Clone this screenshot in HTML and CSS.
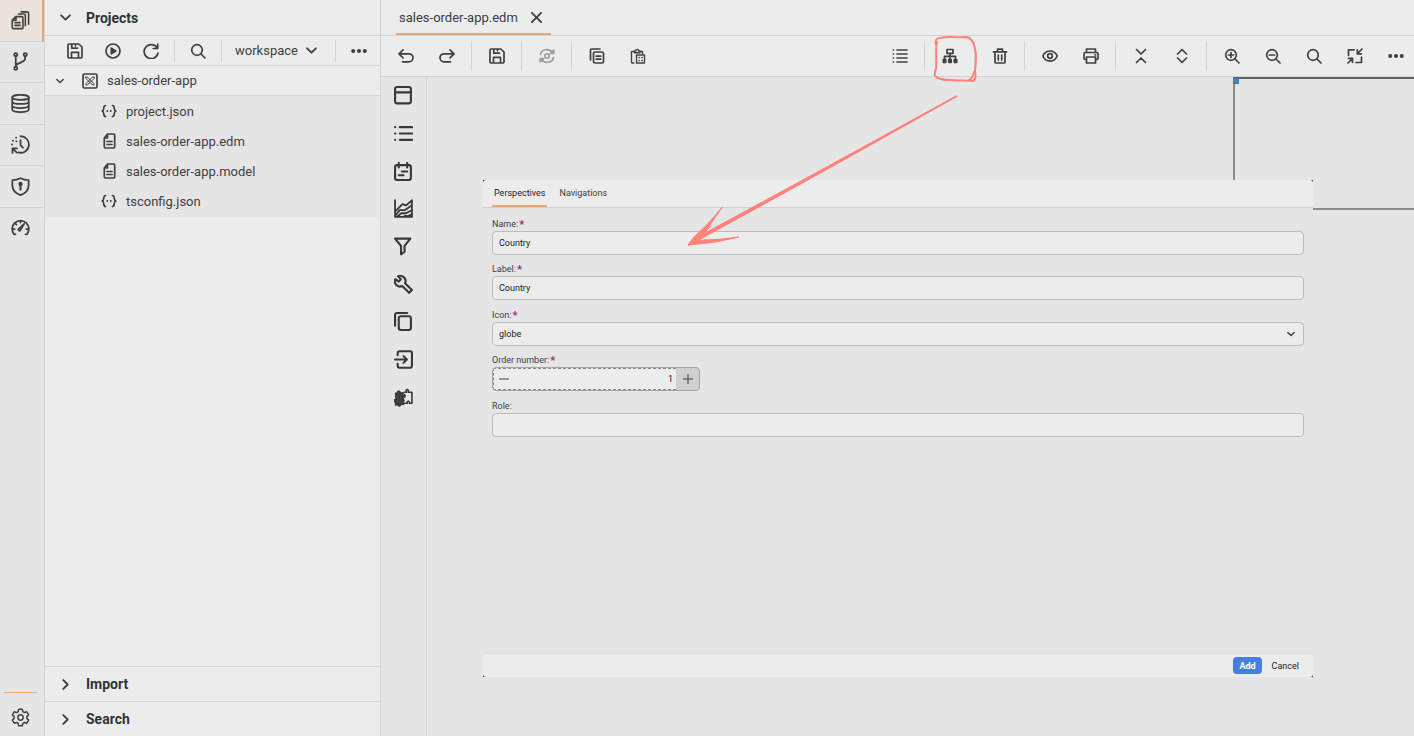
FILE: index.html
```html
<!DOCTYPE html>
<html lang="en">
<head>
    <meta charset="UTF-8">
    <meta name="viewport" content="width=device-width, initial-scale=1.0">
    <title>sales-order-app.edm</title>
    <link rel="stylesheet" href="styles.css">
</head>
<body>
    <!-- Icon sprite -->
    <svg class="sprite" aria-hidden="true">
        <symbol id="i-files" viewBox="0 0 18 18"><path d="M4.500 5.300h5.800a1 1 0 0 1 1 1v9.400a1 1 0 0 1-1 1H2.200a1 1 0 0 1-1-1V8.600zM4.800 5.500v3.300H1.500M3.700 11h5M3.700 13.600h5M7 2.800h5.400a1.200 1.200 0 0 1 1.200 1.200v10M9.500.8h6a1.200 1.200 0 0 1 1.200 1.200v10.500" stroke-width="1.500"/></symbol>
        <symbol id="i-branch" viewBox="0 0 18 18"><circle cx="4.500" cy="2.500" r="1.500"/><circle cx="13.500" cy="2.500" r="1.500"/><circle cx="4.500" cy="15.500" r="1.500"/><path d="M4.500 4v10M13.300 4v2.500q0 1.500-1.500 2.200L6 11.500q-1.500.8-1.500 2.500"/></symbol>
        <symbol id="i-db" viewBox="0 0 18 18"><ellipse cx="9" cy="3.200" rx="7.800" ry="2.400"/><path d="M1.200 3.200v11.500c0 3.200 15.600 3.200 15.600 0V3.200M1.200 7c0 3.200 15.600 3.200 15.600 0M1.200 10.900c0 3.200 15.600 3.200 15.600 0"/></symbol>
        <symbol id="i-history" viewBox="0 0 18 18"><path d="M9 1.200a7.800 7.800 0 1 1-2 15.300M9 4.800v4.700l2.300 2.500M5.500 16.700L2.500 13.700M1.400 17v-4.300h4.300"/><path d="M4.800 2.500h.1M1.800 5.500h.1M.9 9h.1M5.200 6h.1" stroke-width="1.800"/></symbol>
        <symbol id="i-shield" viewBox="0 0 18 18"><path d="M9 1.200c2.500 1.300 5 1.800 7.700 1.800v5c0 4.500-3 7.300-7.700 9.200C4.300 15.300 1.300 12.500 1.300 8V3C4 3 6.500 2.500 9 1.200z"/><circle cx="9" cy="6.600" r="1.200" class="solid"/><path d="M9 7v5" stroke-width="2"/></symbol>
        <symbol id="i-gauge" viewBox="0 0 18 18"><path d="M4.200 15.500H3A7.900 7.900 0 1 1 15 15.500h-1.200M1.500 10.500h2M14.500 10.500h2M4 5l1.200 1.200M9 2.500v1.800"/><path d="M7 10.500l5.500-5-4 6.500a1.200 1.200 0 0 1-1.500-1.500z"/></symbol>
        <symbol id="i-gear" viewBox="0 0 18 18"><g stroke-width="1.400"><circle cx="9" cy="9" r="2.500"/><path d="M7.300 1.200h3.400l.6 2.300 1.400.8 2.300-.7 1.700 3-1.700 1.600v1.600l1.700 1.600-1.700 3-2.300-.7-1.400.8-.6 2.300H7.300l-.6-2.300-1.400-.8-2.300.7-1.700-3L3 9.800V8.200L1.300 6.600l1.700-3 2.300.7 1.400-.8z"/></g></symbol>
        <symbol id="i-save" viewBox="0 0 16 16"><path d="M2.200 1h9.600L15 4v9.800a1.200 1.200 0 0 1-1.200 1.200H2.200A1.200 1.200 0 0 1 1 13.800V2.200A1.200 1.200 0 0 1 2.200 1zM4.800 1v4.200h5.700M8.500 1v1.800M4.500 15V9.300h7V15"/></symbol>
        <symbol id="i-play" viewBox="0 0 16 16"><circle cx="8" cy="8" r="7"/><path class="solid" d="M6.300 5.200L10.800 8l-4.500 2.800z"/></symbol>
        <symbol id="i-refresh" viewBox="0 0 16 16"><path d="M14.700 1v4.500h-4.500M14.300 5.300A7 7 0 1 0 15 10"/></symbol>
        <symbol id="i-search" viewBox="0 0 16 16"><circle cx="7" cy="7" r="5.300"/><path d="M11 11l4 4"/></symbol>
        <symbol id="i-zoomin" viewBox="0 0 16 16"><circle cx="7" cy="7" r="5.300"/><path d="M11 11l4 4M4.500 7h5M7 4.500v5"/></symbol>
        <symbol id="i-zoomout" viewBox="0 0 16 16"><circle cx="7" cy="7" r="5.300"/><path d="M11 11l4 4M4.500 7h5"/></symbol>
        <symbol id="i-down" viewBox="0 0 10 10"><path d="M1 3l4 4 4-4"/></symbol>
        <symbol id="i-right" viewBox="0 0 10 10"><path d="M3 1l4 4-4 4"/></symbol>
        <symbol id="i-dots" viewBox="0 0 16 16"><g class="solid"><circle cx="2.200" cy="8" r="1.200"/><circle cx="8" cy="8" r="1.200"/><circle cx="13.800" cy="8" r="1.200"/></g></symbol>
        <symbol id="i-app" viewBox="0 0 16 16"><rect x="1" y="1" width="14" height="14" rx="1.500"/><path d="M4 4l1.800.3 6.200 6.400V12h-1.500L4 5.500zM12 4l-1.800.3L4 10.700V12h1.500L12 5.500z" stroke-width="1"/></symbol>
        <symbol id="i-json" viewBox="0 0 16 16"><path d="M4.500 2.500C1.500 2.500 4 7.300 1.200 8c2.800.7.3 5.500 3.300 5.500M11.500 2.500c3 0 .5 4.800 3.300 5.500-2.800.7-.3 5.500-3.300 5.500"/><path d="M6.200 8h.1M9.700 8h.1" stroke-width="1.800"/></symbol>
        <symbol id="i-doc" viewBox="0 0 16 16"><path d="M6.500 1h6a1.200 1.200 0 0 1 1.200 1.200v11.600a1.200 1.200 0 0 1-1.200 1.200h-8a1.200 1.200 0 0 1-1.200-1.200V5zM6.500 1.200V5h-3M6 8.500h5M6 11.500h5"/></symbol>
        <symbol id="i-close" viewBox="0 0 10 10"><path d="M.8.8l8.400 8.400M9.200.8L.8 9.200"/></symbol>
        <symbol id="i-undo" viewBox="0 0 16 16"><path d="M5 1.800L1 5.800l4 4M1.200 5.800H11a4 4 0 0 1 0 8H4.500"/></symbol>
        <symbol id="i-redo" viewBox="0 0 16 16"><path d="M11 1.800l4 4-4 4M14.800 5.800H5a4 4 0 0 0 0 8h6.500"/></symbol>
        <symbol id="i-sync" viewBox="0 0 16 16"><circle cx="8" cy="8" r="2.200"/><path d="M1.500 6.500C2.500 1 10 0 13.500 4.500M14.500 9.500C13.500 15 6 16 2.500 11.500"/><path class="solid" d="M14.800 2v3.500h-3.500zM1.200 14v-3.500h3.500z"/></symbol>
        <symbol id="i-copytext" viewBox="0 0 16 16"><rect x="4.500" y="4" width="10" height="11" rx="1.500"/><path d="M1.500 12V2.200A1.200 1.200 0 0 1 2.700 1H11M7.200 8.200h4.500M7.200 11.200h4.500"/></symbol>
        <symbol id="i-paste" viewBox="0 0 16 16"><path d="M4 15H2.500a1 1 0 0 1-1-1V3.500h3M10 3.500h2.500v2M4.500 4.800h5.500V3H8.800a1.500 1.500 0 0 0-3 0H4.500zM6.500 7h8v8h-8z" stroke-width="1.400"/><path d="M9 9.500h.1M12 9.500h.1M9 12.500h.1M12 12.500h.1"/></symbol>
        <symbol id="i-lines" viewBox="0 0 16 16"><path d="M5 2h10M5 6h10M5 10h10M5 14h10M1.300 2h.2M1.300 6h.2M1.300 10h.2M1.300 14h.2"/></symbol>
        <symbol id="i-tree" viewBox="0 0 16 16"><path d="M5 1.500h6v3.800H5zM8 5.300v6M2.500 11V8.300h11V11"/><path class="solid" d="M1.300 11.700h2.400v2.600H1.300zM6.800 11.700h2.400v2.600H6.800zM12.300 11.700h2.400v2.600h-2.400z"/></symbol>
        <symbol id="i-trash" viewBox="0 0 16 16"><path d="M1.500 3.800h13M5.500 3.500V1.200h5v2.300M3 4v9.800A1.200 1.200 0 0 0 4.200 15h7.600a1.200 1.200 0 0 0 1.200-1.200V4M6.300 7v5M9.700 7v5"/></symbol>
        <symbol id="i-eye" viewBox="0 0 16 16"><path d="M.8 8c3-6.700 11.400-6.700 14.400 0-3 6.700-11.400 6.700-14.400 0z"/><circle cx="8" cy="8" r="2.300"/></symbol>
        <symbol id="i-print" viewBox="0 0 16 16"><path d="M3.500 4.500V1h9v3.500M3.500 11.500H2.200A1.200 1.200 0 0 1 1 10.300V5.700a1.200 1.200 0 0 1 1.200-1.200h11.600A1.200 1.200 0 0 1 15 5.700v4.600a1.200 1.200 0 0 1-1.200 1.200h-1.300M3.500 9h9v6h-9zM12 6.800h.5"/></symbol>
        <symbol id="i-collapse" viewBox="0 0 16 16"><path d="M3.500 1.500L8 6l4.500-4.500M3.500 14.500L8 10l4.500 4.500"/></symbol>
        <symbol id="i-expand" viewBox="0 0 16 16"><path d="M3.500 6L8 1.500 12.500 6M3.500 10L8 14.500l4.500-4.500"/></symbol>
        <symbol id="i-fit" viewBox="0 0 16 16"><path d="M7 1.800H1.500v5.500M9 14.500h5.500V9M15 1l-4.500 4.500M10.300 1.800v4h4M1 15l4.500-4.500M1.500 10.300h4v4"/></symbol>
        <symbol id="i-panel" viewBox="0 0 18 18"><rect x="1" y="1" width="15" height="15.500" rx="2"/><path d="M1 6h15"/></symbol>
        <symbol id="i-list" viewBox="0 0 18 18"><path d="M5.500 3h11.700M5.500 9h11.700M5.500 15h11.700M1 3h.2M1 9h.2M1 15h.2"/></symbol>
        <symbol id="i-notes" viewBox="0 0 18 18"><rect x="1" y="3" width="15" height="14" rx="2"/><path d="M4.500.9v4.300M12.500.9v4.300M7.500 9h5M4.500 12.500h4.500"/></symbol>
        <symbol id="i-chart" viewBox="0 0 18 18"><path d="M1 1v16h16V1.200L11.500 6 8 4.800 1 12M1 16l4.500-5.500h5L17 6M3 16.800l4-3.300h4.500L17 10.500M8.500 17l2-1 3 .2 3.500-2" stroke-width="1.700"/></symbol>
        <symbol id="i-filter" viewBox="0 0 18 18"><path d="M1 1.500h14.500L10 8.500v5.500l-3.300 2.500v-8z"/></symbol>
        <symbol id="i-wrench" viewBox="0 0 18 18"><path d="M3.800 1.300A5 5 0 0 1 10.500 7.800l6.500 6.400-2.700 2.700L7.800 10.500A5 5 0 0 1 1.200 4l3.200 2.300L6.500 4z"/></symbol>
        <symbol id="i-copy" viewBox="0 0 18 18"><rect x="4.500" y="4" width="11.500" height="13" rx="2"/><path d="M1 13V3a2 2 0 0 1 2-2h9.500"/></symbol>
        <symbol id="i-enter" viewBox="0 0 18 18"><path d="M3.500 5V3a1.800 1.800 0 0 1 1.800-1.800h10A1.800 1.800 0 0 1 17 3v12a1.800 1.800 0 0 1-1.800 1.800h-10A1.800 1.800 0 0 1 3.500 15v-2M1 9h11M9 5.800L12.200 9 9 12.200"/></symbol>
        <symbol id="i-puzzle" viewBox="0 0 18 18"><g stroke-width="1.500"><path class="solid" d="M1.500 5h2.200q-.8-2 .8-2t.8 2l3.200-.5v2.200q2-1 2 .8t-2 1.200l.5 2.300q1 1.500-.5 2l.5 2.500-2.800-.5q.3 2-1.200 2t-.8-2l-2.700 1 .5-3q-1.800.5-1.800-1t1.800-1z"/><path d="M9.500 4h2.300q-.8-2.500.7-2.500T13.500 4h3.500v10.500h-2.500q.3-2-1-2t-1 2H10"/></g></symbol>
    </svg>

    <div class="app">
        <nav class="rail">
            <div class="rail-items">
                <button class="rail-btn active" aria-label="Projects"><svg class="icon lg"><use href="#i-files"/></svg></button>
                <button class="rail-btn" aria-label="Git"><svg class="icon lg"><use href="#i-branch"/></svg></button>
                <button class="rail-btn" aria-label="Database"><svg class="icon lg"><use href="#i-db"/></svg></button>
                <button class="rail-btn" aria-label="Jobs"><svg class="icon lg"><use href="#i-history"/></svg></button>
                <button class="rail-btn" aria-label="Security"><svg class="icon lg"><use href="#i-shield"/></svg></button>
                <button class="rail-btn" aria-label="Monitoring"><svg class="icon lg"><use href="#i-gauge"/></svg></button>
            </div>
            <button class="settings" aria-label="Settings"><svg class="icon lg"><use href="#i-gear"/></svg></button>
        </nav>

        <aside class="sidebar">
            <button class="section"><svg class="icon sm"><use href="#i-down"/></svg>Projects</button>
            <div class="side-toolbar">
                <button class="tool" aria-label="Save all"><svg class="icon"><use href="#i-save"/></svg></button>
                <button class="tool" aria-label="Publish"><svg class="icon"><use href="#i-play"/></svg></button>
                <button class="tool" aria-label="Refresh"><svg class="icon"><use href="#i-refresh"/></svg></button>
                <span class="sep"></span>
                <button class="tool" aria-label="Search"><svg class="icon"><use href="#i-search"/></svg></button>
                <span class="sep"></span>
                <button class="workspace">workspace <svg class="icon sm"><use href="#i-down"/></svg></button>
                <span class="sep"></span>
                <button class="tool" aria-label="More"><svg class="icon"><use href="#i-dots"/></svg></button>
            </div>
            <button class="project"><svg class="icon xs"><use href="#i-down"/></svg><svg class="icon"><use href="#i-app"/></svg>sales-order-app</button>
            <ul class="files">
                <li><a href="#"><svg class="icon"><use href="#i-json"/></svg>project.json</a></li>
                <li><a href="#"><svg class="icon"><use href="#i-doc"/></svg>sales-order-app.edm</a></li>
                <li><a href="#"><svg class="icon"><use href="#i-doc"/></svg>sales-order-app.model</a></li>
                <li><a href="#"><svg class="icon"><use href="#i-json"/></svg>tsconfig.json</a></li>
            </ul>
            <div class="side-bottom">
                <button class="section"><svg class="icon sm"><use href="#i-right"/></svg>Import</button>
                <button class="section"><svg class="icon sm"><use href="#i-right"/></svg>Search</button>
            </div>
        </aside>

        <main class="editor">
            <div class="tabs">
                <div class="tab">
                    <a href="#">sales-order-app.edm</a>
                    <button aria-label="Close"><svg class="icon sm"><use href="#i-close"/></svg></button>
                </div>
            </div>
            <div class="toolbar">
                <button class="tool" aria-label="Undo"><svg class="icon"><use href="#i-undo"/></svg></button>
                <button class="tool" aria-label="Redo"><svg class="icon"><use href="#i-redo"/></svg></button>
                <span class="sep"></span>
                <button class="tool" aria-label="Save"><svg class="icon"><use href="#i-save"/></svg></button>
                <span class="sep"></span>
                <button class="tool" aria-label="Regenerate" disabled><svg class="icon"><use href="#i-sync"/></svg></button>
                <span class="sep"></span>
                <button class="tool" aria-label="Copy"><svg class="icon"><use href="#i-copytext"/></svg></button>
                <button class="tool" aria-label="Paste"><svg class="icon"><use href="#i-paste"/></svg></button>
                <span class="spacer"></span>
                <button class="tool" aria-label="Properties"><svg class="icon"><use href="#i-lines"/></svg></button>
                <span class="sep"></span>
                <button class="tool" aria-label="Navigation"><svg class="icon"><use href="#i-tree"/></svg></button>
                <span class="sep"></span>
                <button class="tool" aria-label="Delete"><svg class="icon"><use href="#i-trash"/></svg></button>
                <span class="sep"></span>
                <button class="tool" aria-label="Show"><svg class="icon"><use href="#i-eye"/></svg></button>
                <button class="tool" aria-label="Print"><svg class="icon"><use href="#i-print"/></svg></button>
                <span class="sep"></span>
                <button class="tool" aria-label="Collapse all"><svg class="icon"><use href="#i-collapse"/></svg></button>
                <button class="tool" aria-label="Expand all"><svg class="icon"><use href="#i-expand"/></svg></button>
                <span class="sep"></span>
                <button class="tool" aria-label="Zoom in"><svg class="icon"><use href="#i-zoomin"/></svg></button>
                <button class="tool" aria-label="Zoom out"><svg class="icon"><use href="#i-zoomout"/></svg></button>
                <button class="tool" aria-label="Actual size"><svg class="icon"><use href="#i-search"/></svg></button>
                <button class="tool" aria-label="Fit"><svg class="icon"><use href="#i-fit"/></svg></button>
                <button class="tool" aria-label="More"><svg class="icon"><use href="#i-dots"/></svg></button>
            </div>
            <div class="work">
                <div class="palette">
                    <div class="palette-items">
                        <button aria-label="Entity"><svg class="icon lg"><use href="#i-panel"/></svg></button>
                        <button aria-label="Property"><svg class="icon lg"><use href="#i-list"/></svg></button>
                        <button aria-label="Dependent entity"><svg class="icon lg"><use href="#i-notes"/></svg></button>
                        <button aria-label="Report"><svg class="icon lg"><use href="#i-chart"/></svg></button>
                        <button aria-label="Filter"><svg class="icon lg"><use href="#i-filter"/></svg></button>
                        <button aria-label="Setting"><svg class="icon lg"><use href="#i-wrench"/></svg></button>
                        <button aria-label="Copied entity"><svg class="icon lg"><use href="#i-copy"/></svg></button>
                        <button aria-label="Projection"><svg class="icon lg"><use href="#i-enter"/></svg></button>
                        <button aria-label="Extension"><svg class="icon lg"><use href="#i-puzzle"/></svg></button>
                    </div>
                </div>
                <div class="canvas">
                    <div class="outline"><span class="handle"></span></div>
                    <div class="dialog">
                        <div class="dialog-tabs">
                            <button class="active">Perspectives</button>
                            <button>Navigations</button>
                        </div>
                        <div class="dialog-body">
                            <form class="form">
                                <div class="field">
                                    <label for="name">Name:<b>*</b></label>
                                    <input type="text" id="name" value="Country">
                                </div>
                                <div class="field">
                                    <label for="label">Label:<b>*</b></label>
                                    <input type="text" id="label" value="Country">
                                </div>
                                <div class="field">
                                    <label for="icon">Icon:<b>*</b></label>
                                    <div class="select">
                                        <select id="icon"><option>globe</option></select>
                                        <svg class="icon xs"><use href="#i-down"/></svg>
                                    </div>
                                </div>
                                <div class="field">
                                    <label for="order">Order number:<b>*</b></label>
                                    <div class="stepper">
                                        <div class="stepper-value">
                                            <button type="button" aria-label="Decrease"><svg class="icon sm" viewBox="0 0 10 10"><path d="M0 5h10"/></svg></button>
                                            <input type="text" id="order" value="1">
                                        </div>
                                        <button type="button" class="plus" aria-label="Increase"><svg class="icon sm" viewBox="0 0 10 10"><path d="M0 5h10M5 0v10"/></svg></button>
                                    </div>
                                </div>
                                <div class="field">
                                    <label for="role">Role:</label>
                                    <input type="text" id="role">
                                </div>
                            </form>
                        </div>
                        <div class="dialog-footer">
                            <button class="primary">Add</button>
                            <button>Cancel</button>
                        </div>
                    </div>
                </div>
            </div>
        </main>

        <!-- Hand-drawn marker around the navigation button, with an arrow to the dialog -->
        <svg class="marker" viewBox="0 0 750 260">
            <path d="M273 42c-2 8 0 18-1 26-1 5-2 7-1 8 4 4 10 4 16 4 7 1 16 0 21 1 4 0 4-6 3-10 1-8 2-16 0-22-1-6-4-12-10-12-8 1-16-1-25 1-4 0-5 3-4 7"/>
            <path d="M310 72c-1 4-2 7-5 8"/>
            <path class="shaft" d="M292 96Q165 166 32 238L24 245.500 33 241Q165 169 293 96.500z"/>
            <path class="shaft" d="M58 207.500Q44 225 30 237L24 245Q50 243.500 75 237Q54 240 34 240.500Q46 226 58 207.500z"/>
            <path class="gap" d="M47 226L37 236M58 240L40 240"/>
        </svg>
    </div>
</body>
</html>
```
FILE: styles.css
```css
* {
    box-sizing: border-box;
}
body {
    margin: 0;
    font-family: Roboto, "Liberation Sans", sans-serif;
    font-size: 13px;
    color: #404040;
    background-color: #e5e5e5;
}
button, input, select {
    font: inherit;
    color: inherit;
}
button {
    display: flex;
    align-items: center;
    justify-content: center;
    padding: 0;
    border: none;
    background: none;
    cursor: pointer;
}
a {
    color: inherit;
    text-decoration: none;
}
.sprite {
    display: none;
}
.icon {
    flex: none;
    width: 16px;
    height: 16px;
    fill: none;
    stroke: #404040;
    stroke-width: 1.7;
    stroke-linecap: round;
    stroke-linejoin: round;
}
.icon.lg {
    width: 19px;
    height: 19px;
}
.icon.sm {
    width: 11px;
    height: 11px;
}
.icon.xs {
    width: 8px;
    height: 8px;
}
.solid {
    fill: #404040;
}
.app {
    position: relative;
    display: flex;
    height: 100vh;
    overflow: hidden;
}

/* left rail */
.rail {
    display: flex;
    flex-direction: column;
    justify-content: space-between;
    width: 45px;
    border-right: 1px solid #d3d3d3;
}
.rail-items {
    display: flex;
    flex-direction: column;
    height: 248px;
}
.rail-btn {
    flex: 1;
    padding-right: 3px;
    border-bottom: 1px solid #d3d3d3;
}
.rail-btn:last-child {
    border-bottom: none;
}
.rail-btn.active {
    padding-right: 1px;
    background-color: #ebe3db;
    border-right: 2px solid #e0a878;
}
.settings {
    width: 33px;
    height: 44px;
    margin-left: 4px;
    padding-top: 6px;
    border-top: 1px solid #e5ad7a;
}

/* projects panel */
.sidebar {
    display: flex;
    flex-direction: column;
    width: 336px;
    background-color: #ececec;
    border-right: 1px solid #d3d3d3;
}
.section {
    justify-content: flex-start;
    gap: 15px;
    height: 35px;
    padding-left: 15px;
    font-weight: bold;
    color: #333;
}
.side-toolbar {
    display: flex;
    align-items: center;
    gap: 8px;
    height: 31px;
    padding-left: 15px;
    border-top: 1px solid #d3d3d3;
    border-bottom: 1px solid #d3d3d3;
}
.side-toolbar .tool {
    width: 30px;
    height: 28px;
}
.sep {
    flex: none;
    width: 1px;
    height: 22px;
    background-color: #d3d3d3;
}
.workspace {
    gap: 8px;
    padding: 0 10px 0 5px;
}
.project {
    justify-content: flex-start;
    gap: 9px;
    height: 30px;
    padding-left: 11px;
    border-bottom: 1px solid #d3d3d3;
}
.project .xs {
    margin-right: 9px;
}
.files {
    margin: 0;
    padding: 0 0 1px;
    list-style: none;
    background-color: #e5e5e5;
}
.files a {
    display: flex;
    align-items: center;
    gap: 9px;
    height: 30px;
    padding-left: 56px;
}
.side-bottom {
    margin-top: auto;
}
.section {
    font-size: 14px;
}
.side-bottom .section {
    width: 100%;
    border-top: 1px solid #d3d3d3;
}

/* editor */
.editor {
    display: flex;
    flex: 1;
    flex-direction: column;
    min-width: 0;
}
.tabs {
    display: flex;
    height: 36px;
    padding-left: 15px;
    background-color: #ececec;
    border-bottom: 1px solid #d3d3d3;
}
.tab {
    display: flex;
    align-items: center;
    gap: 13px;
    padding: 2px 9px 0 3px;
    border-bottom: 2px solid #e0a878;
}
.toolbar {
    display: flex;
    align-items: center;
    gap: 8px;
    height: 41px;
    padding: 0 2px 0 8px;
    background-color: #ececec;
    border-bottom: 1px solid #d3d3d3;
}
.toolbar .tool {
    width: 33px;
    height: 33px;
}
.toolbar .sep {
    height: 30px;
}
.tool:disabled {
    opacity: 0.45;
}
.spacer {
    flex: 1;
}
.work {
    display: flex;
    flex: 1;
}
.palette {
    width: 46px;
    border-right: 1px solid #d3d3d3;
}
.palette-items {
    display: flex;
    flex-direction: column;
    height: 339px;
}
.palette button {
    flex: 1;
    width: 45px;
}
.palette .icon {
    stroke: #383838;
    stroke-width: 2;
}
.canvas {
    position: relative;
    flex: 1;
}
.outline {
    position: absolute;
    top: 0;
    right: 0;
    width: 181px;
    height: 133px;
    border: 2px solid #8b8b8b;
    border-top-color: #606060;
    border-right: none;
}
.handle {
    position: absolute;
    top: -1px;
    left: -2px;
    width: 6px;
    height: 6px;
    background-color: #4a8a9a;
    border: 1px solid #3578d8;
}

/* perspective dialog */
.dialog {
    position: absolute;
    inset: 103px 101px 59px 56px;
    display: flex;
    flex-direction: column;
    font-size: 9px;
    background-color: #333;
}
.dialog-tabs {
    display: flex;
    gap: 10px;
    height: 28px;
    padding-left: 9px;
    background-color: #ececec;
    border-bottom: 1px solid #d0d0d0;
    border-radius: 3px 3px 0 0;
}
.dialog-tabs button {
    padding: 0 2px;
    border-bottom: 2px solid transparent;
}
.dialog-tabs .active {
    color: #222;
    border-bottom-color: #e0a878;
}
.dialog-body {
    flex: 1;
    padding: 9px 9px 0;
    background-color: #e5e5e5;
}
.form {
    display: grid;
    grid-auto-rows: 1fr;
    height: 227px;
}
.field label {
    display: block;
    height: 14px;
    line-height: 14px;
}
.field b {
    margin-left: 1px;
    font-size: 11px;
    line-height: 9px;
    vertical-align: -1px;
    color: #a0208c;
}
.field > input, .select, .stepper {
    display: block;
    width: 100%;
    height: 24px;
    background-color: #ececec;
    border: 1px solid #bcbcbc;
    border-radius: 4px;
    color: #222;
}
.field > input {
    padding: 0 6px;
}
.select {
    position: relative;
}
.select select {
    width: 100%;
    height: 22px;
    padding: 0 6px;
    border: none;
    background: none;
    appearance: none;
}
.select .icon {
    position: absolute;
    top: 7px;
    right: 8px;
    pointer-events: none;
}
.stepper {
    display: flex;
    width: 208px;
    overflow: hidden;
    background-color: #cfcfcf;
    border-color: #a5a5a5;
}
.stepper-value {
    display: flex;
    flex: 1;
    background-color: #ececec;
    border: 1px dashed #888;
    border-right: none;
}
.stepper-value button {
    width: 20px;
}
.stepper-value input {
    flex: 1;
    min-width: 0;
    padding: 0 3px;
    border: none;
    background: none;
    text-align: right;
}
.stepper .icon {
    width: 10px;
    height: 10px;
    stroke-width: 1;
    stroke-linecap: butt;
}
.plus {
    width: 23px;
}
.dialog-footer {
    display: flex;
    align-items: center;
    justify-content: flex-end;
    gap: 4px;
    height: 24px;
    padding-right: 8px;
    background-color: #ececec;
    border-top: 1px solid #dedede;
    border-radius: 0 0 3px 3px;
}
.dialog-footer button {
    height: 17px;
    padding: 0 6px;
    border-radius: 4px;
    color: #222;
}
.dialog-footer .primary {
    font-weight: bold;
    color: #fff;
    background-color: #467fe0;
}

.marker {
    position: absolute;
    top: 0;
    right: 0;
    width: 750px;
    height: 260px;
    fill: none;
    stroke: #ff827b;
    stroke-width: 2;
    stroke-linecap: round;
    stroke-linejoin: round;
    pointer-events: none;
}
.marker .shaft {
    fill: #ff827b;
    stroke-width: 1;
}
.marker .gap {
    stroke-width: 1;
}
```
